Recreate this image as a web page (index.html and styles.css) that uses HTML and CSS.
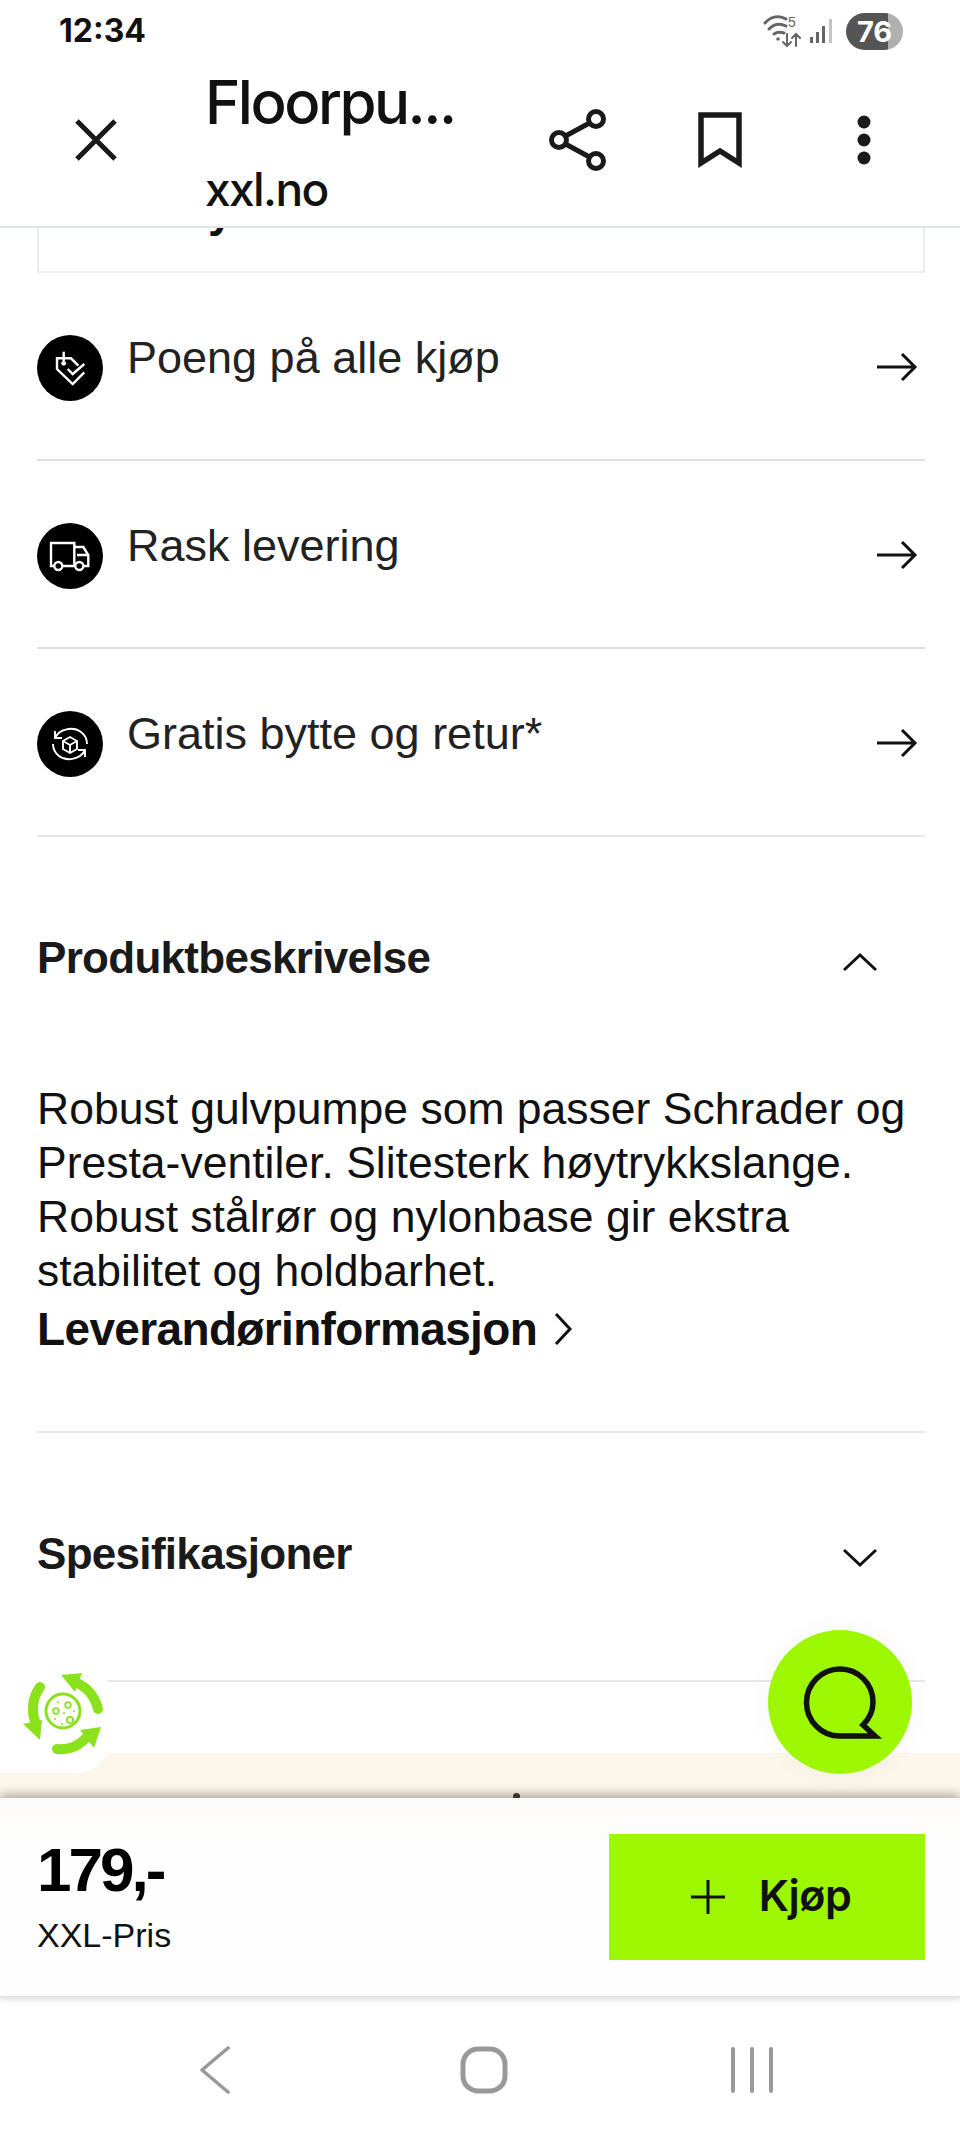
FILE: index.html
```html
<!DOCTYPE html>
<html lang="en">
<head>
  <meta charset="UTF-8">
  <meta name="viewport" content="width=device-width, initial-scale=1.0">
  <title>Floorpump - xxl.no</title>
  <link rel="stylesheet" href="styles.css">
</head>
<body>
<div class="page">

  <div class="status-bar">
    <span class="clock">12:34</span>
    <div class="status-icons">
      <svg class="wifi" width="44" height="34" viewBox="0 0 44 34" fill="none" stroke="#666" stroke-linecap="round">
        <path d="M2 9C8 2 17 1 23 5" stroke-width="3"/>
        <path d="M6 15C11 10 17 9 23 12" stroke-width="3"/>
        <path d="M11 20C14 18 18 18 21 19" stroke-width="3"/>
        <circle cx="15" cy="25" r="1.8" fill="#666" stroke="none"/>
        <text x="25" y="13" font-size="14" font-family="Liberation Sans" fill="#666" stroke="none">5</text>
        <path d="M24 20V32M20 28L24 32L28 28M33 32V20M29 24L33 20L37 24" stroke-width="2"/>
      </svg>
      <svg class="signal" width="26" height="28" viewBox="0 0 26 28">
        <rect x="2" y="20" width="3" height="6" fill="#666"/>
        <rect x="8" y="15" width="3" height="11" fill="#666"/>
        <rect x="14" y="9" width="3" height="17" fill="#666"/>
        <rect x="21" y="2" width="3" height="24" fill="#c4c4c4"/>
      </svg>
      <div class="battery"><span>76</span></div>
    </div>
  </div>

  <header class="app-bar">
    <svg class="close-icon" width="42" height="42" viewBox="0 0 42 42" fill="none" stroke="#1a1a1a" stroke-width="5">
      <path d="M2 2L40 40M40 2L2 40"/>
    </svg>
    <div class="app-title">
      <div class="page-name">Floorpu...</div>
      <div class="site-name">xxl.no</div>
    </div>
    <div class="app-actions">
      <svg class="share-icon" width="58" height="62" viewBox="0 0 58 62" fill="none" stroke="#1a1a1a" stroke-width="5">
        <circle cx="47" cy="10" r="7.5"/>
        <circle cx="10" cy="31" r="7.5"/>
        <circle cx="47" cy="52" r="7.5"/>
        <path d="M16.5 27L40.5 14M16.5 35L40.5 48"/>
      </svg>
      <svg class="mark-icon" width="44" height="56" viewBox="0 0 44 56" fill="none" stroke="#1a1a1a" stroke-width="5.5">
        <path d="M3 3H41V51L22 39L3 51Z"/>
      </svg>
      <svg width="14" height="50" viewBox="0 0 14 50" fill="#1a1a1a">
        <circle cx="7" cy="7" r="6.5"/>
        <circle cx="7" cy="25" r="6.5"/>
        <circle cx="7" cy="43" r="6.5"/>
      </svg>
    </div>
  </header>

  <main class="content">
    <div class="club-card"><span>y</span></div>

    <a class="perk">
      <span class="perk-icon">
        <svg width="40" height="40" viewBox="0 0 40 40" fill="none" stroke="#fff" stroke-width="2.4">
          <path d="M28.3 17.7L21 10.3H7V21L22.7 36L34.3 24.3"/>
          <path d="M13.7 3.7V13"/>
          <circle cx="13.7" cy="15.3" r="2.4" fill="#fff" stroke="none"/>
          <path d="M17.7 21L22.7 26L34.3 16"/>
        </svg>
      </span>
      <span class="perk-label">Poeng på alle kjøp</span>
      <svg class="perk-arrow" width="42" height="32" viewBox="0 0 42 32" fill="none" stroke="#111" stroke-width="3">
        <path d="M1 16H39M26 3L39 16L26 29"/>
      </svg>
    </a>

    <a class="perk">
      <span class="perk-icon">
        <svg width="42" height="42" viewBox="0 0 42 42" fill="none" stroke="#fff" stroke-width="2.4">
          <path d="M5 31H2V8H25.3V31H14M25.3 12H34.3L39.3 20V31H35M25.3 31H26M28 20H39.3"/>
          <circle cx="9.3" cy="31" r="4"/>
          <circle cx="30.3" cy="31" r="4"/>
        </svg>
      </span>
      <span class="perk-label">Rask levering</span>
      <svg class="perk-arrow" width="42" height="32" viewBox="0 0 42 32" fill="none" stroke="#111" stroke-width="3">
        <path d="M1 16H39M26 3L39 16L26 29"/>
      </svg>
    </a>

    <a class="perk">
      <span class="perk-icon">
        <svg width="42" height="42" viewBox="0 0 42 42" fill="none" stroke="#fff" stroke-width="1.9">
          <path d="M6 15C10 6 24 3 32 9C36 12 38 16 38 21"/>
          <path d="M4 21C4 26 6 30 10 33C18 39 32 36 36 27"/>
          <path d="M6 8V15H13M36 34V27H29"/>
          <path d="M21 14L28 18V26L21 30L14 26V18ZM14 18L21 22L28 18M21 22V30"/>
        </svg>
      </span>
      <span class="perk-label">Gratis bytte og retur*</span>
      <svg class="perk-arrow" width="42" height="32" viewBox="0 0 42 32" fill="none" stroke="#111" stroke-width="3">
        <path d="M1 16H39M26 3L39 16L26 29"/>
      </svg>
    </a>

    <section class="fold">
      <div class="fold-head">
        <h2>Produktbeskrivelse</h2>
        <svg width="36" height="20" viewBox="0 0 36 20" fill="none" stroke="#111" stroke-width="3">
          <path d="M2 18L18 3L34 18"/>
        </svg>
      </div>
      <p class="fold-text">Robust gulvpumpe som passer Schrader og Presta-ventiler. Slitesterk høytrykkslange. Robust stålrør og nylonbase gir ekstra stabilitet og holdbarhet.</p>
      <a class="supplier">Leverandørinformasjon
        <svg width="20" height="34" viewBox="0 0 20 34" fill="none" stroke="#111" stroke-width="3">
          <path d="M3 2L17 17L3 32"/>
        </svg>
      </a>
    </section>

    <section class="fold fold-closed">
      <div class="fold-head">
        <h2>Spesifikasjoner</h2>
        <svg width="36" height="20" viewBox="0 0 36 20" fill="none" stroke="#111" stroke-width="3">
          <path d="M2 2L18 17L34 2"/>
        </svg>
      </div>
    </section>

    <div class="cream-band"></div>
  </main>

  <footer class="buy-bar">
    <div class="price-box">
      <div class="price">179,-</div>
      <div class="price-label">XXL-Pris</div>
    </div>
    <button class="buy-btn" type="button">
      <svg width="34" height="34" viewBox="0 0 34 34" fill="none" stroke="#111" stroke-width="3">
        <path d="M17 0V34M0 17H34"/>
      </svg>
      <span class="buy-text">Kjøp</span>
    </button>
  </footer>

  <nav class="nav-bar">
    <svg width="30" height="48" viewBox="0 0 30 48" fill="none" stroke="#999" stroke-width="3.6" stroke-linecap="round" stroke-linejoin="round">
      <path d="M28 2L2 24L28 46"/>
    </svg>
    <svg width="48" height="48" viewBox="0 0 48 48" fill="none" stroke="#999" stroke-width="5">
      <rect x="3" y="3" width="42" height="42" rx="15"/>
    </svg>
    <svg width="44" height="46" viewBox="0 0 44 46" fill="none" stroke="#999" stroke-width="4" stroke-linecap="round">
      <path d="M3 2V44M22 2V44M41 2V44"/>
    </svg>
  </nav>

  <!-- floating widgets over the page -->
  <div class="eco-badge">
    <svg width="130" height="130" viewBox="0 0 130 130" fill="none" stroke="#8be21c" stroke-linecap="round">
      <path d="M75 30C87 35 95 45 98 57" stroke-width="10"/>
      <path d="M40 35C32 46 31 60 36 72" stroke-width="10"/>
      <path d="M57 97C68 98 79 94 87 85" stroke-width="10"/>
      <g fill="#8be21c" stroke="none">
        <polygon points="61,23 82,21 75,40"/>
        <polygon points="40,88 23,72 42,68"/>
        <polygon points="101,75 80,78 94,96"/>
      </g>
      <circle cx="63" cy="59" r="17" stroke-width="3"/>
      <circle cx="56" cy="59" r="2.8" stroke-width="1.8"/>
      <circle cx="68" cy="53" r="2.8" stroke-width="1.8"/>
      <circle cx="70" cy="68" r="3.2" stroke-width="1.8"/>
      <g fill="#8be21c" stroke="none">
        <circle cx="58" cy="50" r="1"/>
        <circle cx="64" cy="61" r="1"/>
        <circle cx="74" cy="59" r="1"/>
        <circle cx="55" cy="67" r="1"/>
        <circle cx="62" cy="72" r="1"/>
      </g>
    </svg>
  </div>
  <div class="chat-btn">
    <svg width="144" height="144" viewBox="0 0 144 144" fill="none" stroke="#111" stroke-width="5.5">
      <path d="M72 39A33 33 0 0 1 105 72C105 82 101 89 95 95L107 106H72A33 33 0 0 1 72 39Z"/>
    </svg>
  </div>
</div>
</body>
</html>
```

FILE: styles.css
```css
* {
  box-sizing: border-box;
}
html, body {
  margin: 0;
  padding: 0;
  background: #fff;
}
.page {
  position: relative;
  width: 960px;
  height: 2140px;
  display: flex;
  flex-direction: column;
  overflow: hidden;
  font-family: "Liberation Sans", Arial, sans-serif;
  color: #1a1a1a;
}

/* status bar */
.status-bar {
  height: 60px;
  padding: 0 57px 0 59px;
  display: flex;
  align-items: center;
  justify-content: space-between;
}
.clock {
  font-family: Inter, sans-serif;
  font-size: 32px;
  font-weight: 700;
  color: #111;
}
.status-icons {
  display: flex;
  align-items: center;
  padding-top: 2px;
}
.signal {
  margin: 0 12px 0 1px;
}
.battery {
  width: 57px;
  height: 37px;
  border-radius: 19px;
  background: linear-gradient(90deg, #555 0, #555 73%, #b0b0b0 73%);
  color: #fff;
  font-family: Inter, sans-serif;
  font-size: 29px;
  font-weight: 700;
  text-align: center;
  line-height: 37px;
}

/* top app bar */
.app-bar {
  height: 168px;
  padding: 0 89px 0 75px;
  display: flex;
  align-items: center;
  background: #fff;
  border-bottom: 2px solid #dfe3e6;
  position: relative;
  z-index: 2;
}
.close-icon {
  margin-bottom: 6px;
}
.app-title {
  margin-left: 88px;
  margin-top: -8px;
}
.page-name {
  font-family: Inter, sans-serif;
  font-size: 60px;
  font-weight: 500;
  line-height: 76px;
  letter-spacing: -2.5px;
  color: #111;
}
.site-name {
  font-family: Inter, sans-serif;
  font-size: 46px;
  font-weight: 500;
  line-height: 50px;
  margin-top: 24px;
  letter-spacing: -1.6px;
  color: #111;
}
.app-actions {
  margin-left: auto;
  display: flex;
  align-items: center;
  padding-bottom: 6px;
}
.share-icon {
  margin-right: 91px;
}
.mark-icon {
  margin-right: 115px;
}

/* scrolling content */
.content {
  flex: 1;
  padding: 0 35px 0 37px;
  overflow: hidden;
}
.club-card {
  height: 45px;
  border: 2px solid #eceeee;
  border-top: none;
  overflow: hidden;
  padding-left: 169px;
}
.club-card span {
  display: block;
  margin-top: -45px;
  font-size: 46px;
  font-weight: 700;
  line-height: 54px;
  color: #111;
}
.perk {
  height: 188px;
  padding-top: 58px;
  display: flex;
  align-items: flex-start;
  border-bottom: 2px solid #dedede;
}
.perk:nth-of-type(3) {
  border-bottom-color: #e8e8e8;
}
.perk-icon {
  width: 66px;
  height: 66px;
  margin-top: 4px;
  border-radius: 50%;
  background: #000;
  display: flex;
  align-items: center;
  justify-content: center;
}
.perk-label {
  margin-left: 24px;
  font-size: 45px;
  line-height: 54px;
  color: #222;
}
.perk-arrow {
  margin-left: auto;
  margin-top: 20px;
  margin-right: 7px;
}

/* collapsible sections */
.fold {
  border-bottom: 2px solid #e8e8e8;
}
.fold-head {
  display: flex;
  align-items: center;
  justify-content: space-between;
  padding: 94px 47px 0 0;
}
.fold-head svg {
  margin-top: 7px;
}
.fold-head h2 {
  margin: 0;
  font-size: 44px;
  font-weight: 700;
  line-height: 54px;
  letter-spacing: -0.7px;
  color: #1a1a1a;
}
.fold-text {
  margin: 97px 0 0;
  font-size: 44.5px;
  line-height: 54px;
  color: #111;
}
.supplier {
  display: flex;
  align-items: center;
  gap: 16px;
  margin-top: 2px;
  margin-bottom: 73px;
  font-size: 46px;
  font-weight: 700;
  line-height: 58px;
  letter-spacing: -0.65px;
  color: #111;
}
.fold-closed {
  height: 249px;
}
.cream-band {
  position: relative;
  height: 60px;
  margin: 71px -35px 0 -37px;
  background: #fdf6ea;
}
.cream-band::after {
  content: "";
  position: absolute;
  left: 513px;
  top: 40px;
  width: 7px;
  height: 7px;
  border-radius: 50%;
  background: #333;
}

/* price and buy button */
.buy-bar {
  height: 200px;
  padding: 0 35px 36px 37px;
  display: flex;
  align-items: flex-end;
  justify-content: space-between;
  background: linear-gradient(#fdfcfb, #fefefe 40%);
  border-bottom: 2px solid #e4e4e4;
  box-shadow: 0 -3px 10px rgba(70, 55, 40, 0.45);
  position: relative;
}
.price-box {
  margin-bottom: 5px;
}
.price {
  font-size: 62px;
  font-weight: 700;
  line-height: 70px;
  letter-spacing: -3px;
  color: #000;
}
.price-label {
  margin-top: 10px;
  font-size: 34px;
  line-height: 40px;
  color: #111;
}
.buy-btn {
  width: 316px;
  height: 126px;
  padding-left: 14px;
  border: none;
  background: #9cf700;
  color: #111;
  display: flex;
  align-items: center;
  justify-content: center;
  gap: 34px;
}
.buy-text {
  margin-top: -4px;
  font-family: Inter, sans-serif;
  font-size: 43px;
  font-weight: 600;
  letter-spacing: -0.5px;
}

/* android nav */
.nav-bar {
  height: 142px;
  padding: 2px 0 0 200px;
  display: flex;
  align-items: center;
  background: #fff;
}
.nav-bar svg:first-child {
  margin-right: 230px;
}
.nav-bar svg:nth-child(2) {
  margin-right: 222px;
}

/* floating widgets */
.eco-badge {
  position: absolute;
  left: 0;
  top: 1652px;
  width: 108px;
  height: 121px;
  background: #fff;
  border-radius: 0 30px 30px 0;
}
.chat-btn {
  position: absolute;
  left: 768px;
  top: 1630px;
  width: 144px;
  height: 144px;
  border-radius: 50%;
  background: #9cf700;
  box-shadow: 0 0 24px rgba(0, 0, 0, 0.05);
}
```
